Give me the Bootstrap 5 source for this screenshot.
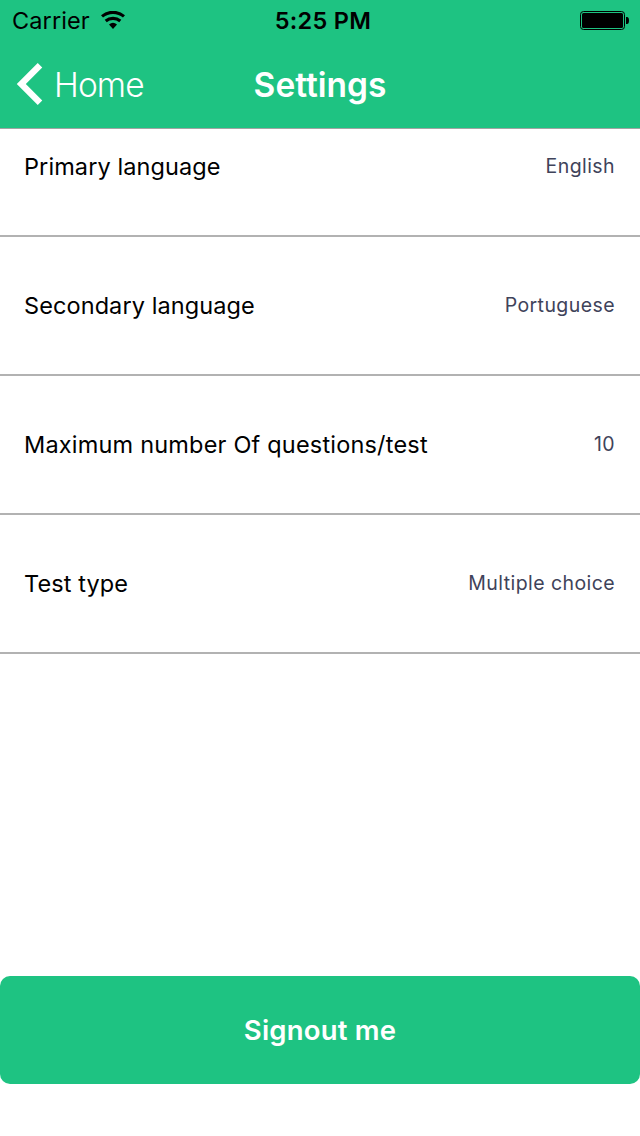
<!DOCTYPE html>
<html lang="en">
<head>
<meta charset="utf-8">
<meta name="viewport" content="width=device-width, initial-scale=1">
<title>Settings</title>
<link href="https://cdn.jsdelivr.net/npm/bootstrap@5.3.0/dist/css/bootstrap.min.css" rel="stylesheet">
<style>
  body { font-family: Inter, "Liberation Sans", sans-serif; color: #000; line-height: 1; }
  .brand-green { background: #1ec382; }
  .top-area { height: 129px; border-bottom: 1px solid #a0a5a3; z-index: 2; }
  .status-bar { height: 40px; padding: 0 11px 0 12px; font-size: 23.5px; }
  .status-bar span { padding-top: 2px; }
  .nav-row { height: 88px; padding: 0 16px; }
  .side { flex: 1 1 0; }
  .carrier { letter-spacing: .1px; }
  .wifi { margin-left: 11px; }
  .clock { font-weight: 600; letter-spacing: .3px; margin-left: 5px; }
  .back-label { font-size: 33.5px; font-weight: 350; letter-spacing: -.9px; margin-left: 11px; padding-top: 3px; }
  .nav-title { font-size: 33.5px; font-weight: 570; letter-spacing: 0; padding-top: 2px; }
  .settings-list { margin-top: -31px; }
  .setting { height: 139px; border: 0 solid #b2b2b2; border-bottom-width: 2px; padding: 0 25px 0 24px; }
  .setting-name { font-size: 23.5px; letter-spacing: .09px; }
  .setting-name.long-name { letter-spacing: .19px; }
  .setting-value { font-size: 19.5px; color: #3f435a; letter-spacing: .42px; }
  .signout { height: 108px; border-radius: 10px; font-size: 27.5px; font-weight: 570; margin-bottom: 52px; padding-top: 8px; letter-spacing: .2px; }
</style>
</head>
<body class="bg-white">
<div class="d-flex flex-column vh-100 overflow-hidden">
  <header class="top-area brand-green position-relative flex-shrink-0">
    <div class="status-bar d-flex align-items-center">
      <div class="side d-flex align-items-center">
        <span class="carrier">Carrier</span>
        <svg class="wifi" width="24" height="18" viewBox="0 0 24 18" aria-hidden="true">
          <g fill="none" stroke="#000" stroke-width="3.200">
            <path d="M1 5.400a17 17 0 0 1 22 0"/>
            <path d="M4.700 9.900a11.500 11.500 0 0 1 14.600 0"/>
          </g>
          <path d="M8 13.400a6.500 6.500 0 0 1 8 0L12 17.900z"/>
        </svg>
      </div>
      <span class="clock">5:25 PM</span>
      <div class="side d-flex justify-content-end">
        <svg width="49" height="20" viewBox="0 0 49 20" aria-hidden="true">
          <rect x=".5" y="1.500" width="44" height="18" rx="3" fill="none" stroke="#000"/>
          <rect x="2" y="3" width="41" height="15" rx="1.500"/>
          <path d="M46 7h1q2 0 2 3.500t-2 3.500h-1z"/>
        </svg>
      </div>
    </div>
    <nav class="nav-row d-flex align-items-center">
      <a href="#" class="side d-flex align-items-center text-white text-decoration-none">
        <svg width="27" height="42" viewBox="0 0 27 42" aria-hidden="true"><path d="M24 2.300L5.300 21 24 39.700" fill="none" stroke="#fff" stroke-width="6.400"/></svg>
        <span class="back-label">Home</span>
      </a>
      <h1 class="nav-title text-white m-0">Settings</h1>
      <div class="side"></div>
    </nav>
  </header>
  <ul class="settings-list list-unstyled mb-0">
    <li class="setting d-flex align-items-center justify-content-between"><span class="setting-name">Primary language</span><span class="setting-value">English</span></li>
    <li class="setting d-flex align-items-center justify-content-between"><span class="setting-name">Secondary language</span><span class="setting-value">Portuguese</span></li>
    <li class="setting d-flex align-items-center justify-content-between"><span class="setting-name long-name">Maximum number Of questions/test</span><span class="setting-value">10</span></li>
    <li class="setting d-flex align-items-center justify-content-between"><span class="setting-name">Test type</span><span class="setting-value">Multiple choice</span></li>
  </ul>
  <button type="button" class="signout btn brand-green border-0 text-white w-100 mt-auto flex-shrink-0">Signout me</button>
</div>
<script src="https://cdn.jsdelivr.net/npm/bootstrap@5.3.0/dist/js/bootstrap.bundle.min.js"></script>
</body>
</html>
